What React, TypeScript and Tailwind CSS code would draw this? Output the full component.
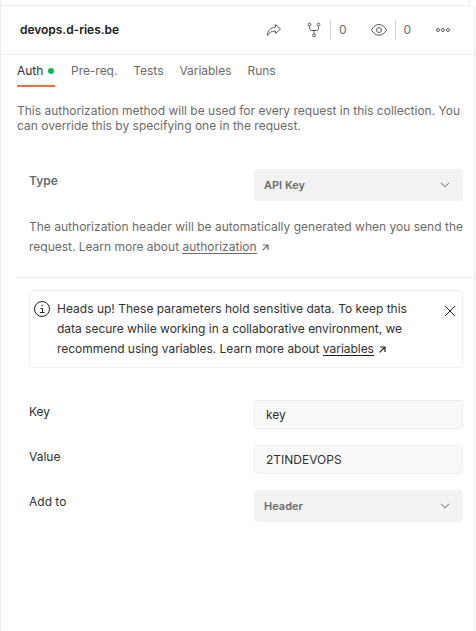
import React from "react";

type IconProps = { className?: string };

const ShareIcon = ({ className }: IconProps) => (
  <svg className={className} width="16" height="16" viewBox="0 0 16 16" fill="none" stroke="#5c5c5c" strokeLinejoin="round">
    <path d="M9.500 2.500 14.500 7 9.500 11.500V9C5.500 9 3 10.500 1.500 13.500 1.500 8.800 4.500 5.500 9.500 5.200Z" />
  </svg>
);

const ForkIcon = ({ className }: IconProps) => (
  <svg className={className} width="16" height="16" viewBox="0 0 16 16" fill="none" stroke="#5c5c5c">
    <circle cx="3.500" cy="2.500" r="1.400" />
    <circle cx="12.500" cy="2.500" r="1.400" />
    <circle cx="8" cy="13.300" r="1.400" />
    <path d="M3.500 4v2.500q0 2 2 2h5q2 0 2-2V4M8 8.500v3.400" />
  </svg>
);

const EyeIcon = ({ className }: IconProps) => (
  <svg className={className} width="16" height="16" viewBox="0 0 16 16" fill="none" stroke="#5c5c5c">
    <path d="M.5 8C2.500 4.500 5 2.500 8 2.500S13.500 4.500 15.500 8C13.500 11.500 11 13.200 8 13.200S2.500 11.500.5 8Z" />
    <circle cx="8" cy="8" r="2.500" />
  </svg>
);

const MoreIcon = ({ className }: IconProps) => (
  <svg className={className} width="16" height="16" viewBox="0 0 16 16" fill="none" stroke="#5c5c5c">
    <circle cx="3" cy="8" r="1.500" />
    <circle cx="8" cy="8" r="1.500" />
    <circle cx="13" cy="8" r="1.500" />
  </svg>
);

const InfoIcon = ({ className }: IconProps) => (
  <svg className={className} width="16" height="16" viewBox="0 0 16 16" fill="none" stroke="#212121">
    <circle cx="8" cy="8" r="7.500" />
    <path d="M6.500 7.500h2v4M6 11.500h4.500" />
    <path d="M7.500 4.500h1.200" strokeWidth="1.300" />
  </svg>
);

const CloseIcon = ({ className }: IconProps) => (
  <svg className={className} width="12" height="12" viewBox="0 0 12 12" fill="none" stroke="#212121">
    <path d="M1 1l10 10M11 1 1 11" />
  </svg>
);

const ChevronIcon = () => (
  <svg width="10" height="6" viewBox="0 0 10 6" fill="none" stroke="#5c5c5c">
    <path d="M1 .8l4 4 4-4" />
  </svg>
);

const ExternalIcon = ({ className }: IconProps) => (
  <svg className={className} width="7" height="7" viewBox="0 0 7 7" fill="none" stroke="currentColor" strokeWidth="1.200">
    <path d="M1 1h5v5M6 1 .6 6.400" />
  </svg>
);

const Select = ({ value }: { value: string }) => (
  <button className="flex h-8 w-[209px] items-center justify-between rounded bg-[#f2f2f2] pl-2.5 pr-[13px] text-[11px] font-semibold text-[#6b6b6b]">
    <span>{value}</span>
    <ChevronIcon />
  </button>
);

const Field = ({ value }: { value: string }) => (
  <div className="flex h-[29px] w-[209px] items-center rounded border border-[#ededed] bg-[#f9f9f9] pl-[11px] text-[12px]">{value}</div>
);

const TABS = ["Pre-req.", "Tests", "Variables", "Runs"];

export default function App() {
  return (
    <div className="flex h-[631px] w-[476px] flex-col overflow-hidden border-l border-[#ededed] bg-white font-['Inter',sans-serif] text-[12px] text-[#303030]">
      <div className="h-1.5 w-[469px] shrink-0 border-b border-r border-[#ededed]" />
      <div className="flex w-[474px] grow flex-col border-r border-[#ededed]">
        <header className="flex h-[49px] items-center border-b border-[#ededed] pl-[19px]">
          <h1 className="w-[246px] text-[12px] font-semibold tracking-[-0.003em] text-[#212121]">devops.d-ries.be</h1>
          <ShareIcon />
          <ForkIcon className="ml-6" />
          <div className="ml-2 flex h-5 w-[41px] items-center border-l border-[#d4d4d4] pl-2 text-[#6b6b6b]">0</div>
          <EyeIcon />
          <div className="ml-2 flex h-5 w-[40px] items-center border-l border-[#d4d4d4] pl-[7.500px] text-[#6b6b6b]">0</div>
          <MoreIcon />
        </header>

        <nav className="flex h-8 gap-4 pl-4 leading-8 tracking-[-0.003em] text-[#6b6b6b]">
          <div className="flex w-[38px] items-center gap-[5px] border-b-2 border-[#ff6c37] pt-0.5 text-[#303030]">
            <span>Auth</span>
            <span className="size-1.5 shrink-0 rounded-full bg-[#0cbb52]" />
          </div>
          {TABS.map((tab) => (
            <span key={tab}>{tab}</span>
          ))}
        </nav>

        <p className="mt-4 whitespace-nowrap pl-4 leading-[15px] text-[#6b6b6b]">
          <span className="block">This authorization method will be used for every request in this collection. You</span>
          <span className="block">can override this by specifying one in the request.</span>
        </p>

        <section className="ml-4 mt-9 flex h-[109px] flex-col border-b border-[#ededed] pl-3 text-[#6b6b6b]">
          <div className="flex w-[434px] justify-between">
            <span className="pt-1 font-semibold leading-4">Type</span>
            <Select value="API Key" />
          </div>
          <p className="mt-4 whitespace-nowrap leading-5">
            <span className="block tracking-[0.001em]">The authorization header will be automatically generated when you send the</span>
            <span className="flex items-center">
              <span className="whitespace-pre tracking-[-0.001em]">request. Learn more about </span>
              <a className="h-[14px] border-b border-[#6b6b6b] leading-[14px]">authorization</a>
              <ExternalIcon className="ml-[5px]" />
            </span>
          </p>
        </section>

        <section className="ml-7 mt-3 flex h-[78px] w-[434px] items-start rounded border border-[#ededed] pl-1 pt-2">
          <InfoIcon className="mt-[2px]" />
          <p className="ml-[7px] w-[387px] whitespace-nowrap leading-5">
            <span className="block tracking-[0.001em]">Heads up! These parameters hold sensitive data. To keep this</span>
            <span className="block tracking-[-0.001em]">data secure while working in a collaborative environment, we</span>
            <span className="flex items-center tracking-[-0.003em]">
              <span className="whitespace-pre tracking-[-0.003em]">recommend using variables. Learn more about </span>
              <a className="h-[14px] border-b border-[#212121] leading-[14px]">variables</a>
              <ExternalIcon className="ml-[5px] text-[#212121]" />
            </span>
          </p>
          <CloseIcon className="mt-1.5" />
        </section>

        <form className="ml-7 mt-8 flex w-[434px] flex-col gap-4">
          <div className="flex justify-between">
            <label className="pt-1 leading-4">Key</label>
            <Field value="key" />
          </div>
          <div className="flex justify-between">
            <label className="pt-1 leading-4">Value</label>
            <Field value="2TINDEVOPS" />
          </div>
          <div className="flex justify-between">
            <label className="pt-1 leading-4">Add to</label>
            <Select value="Header" />
          </div>
        </form>
      </div>
    </div>
  );
}
